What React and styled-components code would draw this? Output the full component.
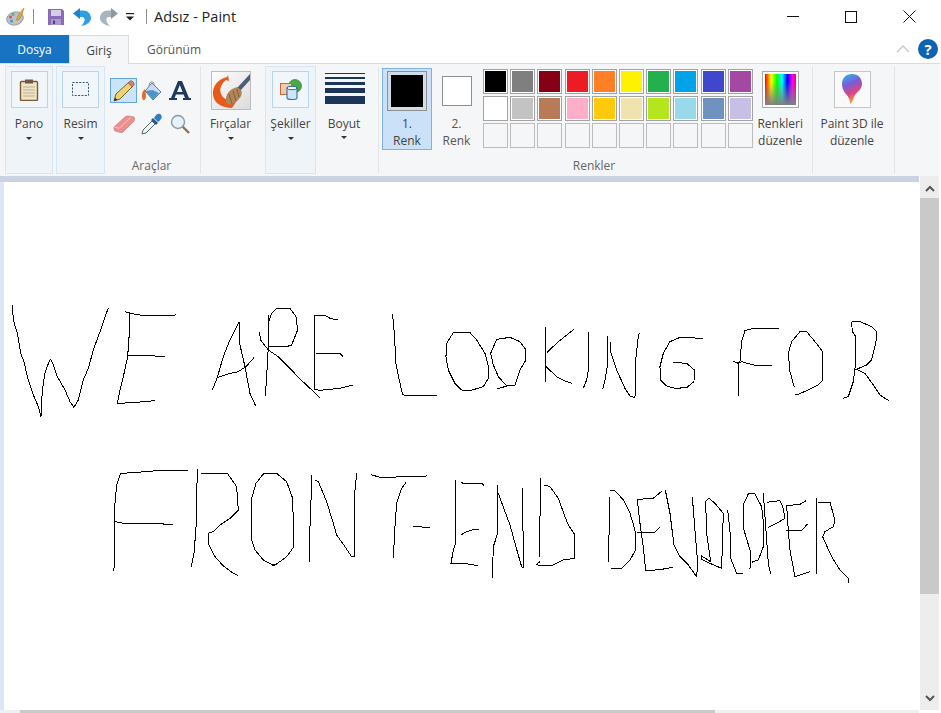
import React from 'react'
import styled, { createGlobalStyle } from 'styled-components'

const GlobalStyle = createGlobalStyle`
  html, body { margin: 0; padding: 0; background: #fff; overflow: hidden; }
  body { font-family: "Open Sans", "Noto Sans", "Liberation Sans", sans-serif; color: #444; }
`

const Window = styled.div`
  width: 941px;
  height: 713px;
  display: flex;
  flex-direction: column;
  overflow: hidden;
`

const TitleBar = styled.div`
  height: 35px;
  box-sizing: border-box;
  padding-bottom: 2px;
  display: flex;
  align-items: center;
  flex-shrink: 0;
`

const QuickIcon = styled.div`
  display: flex;
  align-items: center;
  justify-content: center;
  width: ${({ $w }) => $w}px;
  margin-left: ${({ $ml }) => $ml || 0}px;
`

const TitleSep = styled.div`
  width: 1px;
  height: 15px;
  background: #8d8d8d;
  margin-left: ${({ $ml }) => $ml}px;
`

const Title = styled.div`
  font-size: 14.5px;
  color: #222;
  margin-left: 7px;
  flex: 1;
`

const WinButtons = styled.div`
  display: flex;
  align-items: center;
  margin-right: 25px;
  gap: 46px;
`

const TabBar = styled.div`
  height: 28px;
  display: flex;
  align-items: stretch;
  flex-shrink: 0;
  position: relative;
  z-index: 1;
`

const FileTab = styled.div`
  width: 69px;
  background: #1873c3;
  color: #fff;
  font-size: 12px;
  display: flex;
  align-items: center;
  justify-content: center;
`

const Tab = styled.div`
  width: ${({ $w }) => $w}px;
  font-size: 12px;
  display: flex;
  align-items: center;
  justify-content: center;
  box-sizing: border-box;
  height: ${({ $active }) => ($active ? '29px' : '28px')};
  background: ${({ $active }) => ($active ? '#f5f6f7' : 'transparent')};
  border: 1px solid ${({ $active }) => ($active ? '#dadbdc' : 'transparent')};
  border-bottom: none;
  color: ${({ $active }) => ($active ? '#444' : '#555')};
`

const TabRight = styled.div`
  margin-left: auto;
  display: flex;
  align-items: center;
  gap: 8px;
  padding-right: 3px;
`

const Help = styled.div`
  width: 20px;
  height: 20px;
  border-radius: 50%;
  background: #0f62b0;
  color: #fff;
  font-size: 15px;
  font-weight: 700;
  display: flex;
  align-items: center;
  justify-content: center;
`

const Ribbon = styled.div`
  height: 113px;
  box-sizing: border-box;
  border-top: 1px solid #dadbdc;
  background: #f5f6f7;
  margin-right: 1px;
  padding: 2px 0 0 5px;
  display: flex;
  flex-shrink: 0;
`

const Group = styled.div`
  width: ${({ $w }) => $w}px;
  height: 108px;
  box-sizing: border-box;
  flex-shrink: 0;
  position: relative;
  display: flex;
  flex-direction: column;
  align-items: ${({ $stretch }) => ($stretch ? 'stretch' : 'center')};
  margin-right: ${({ $mr }) => $mr || 0}px;
  margin-left: ${({ $ml }) => $ml || 0}px;
  padding-right: ${({ $pr }) => $pr || 0}px;
  background: ${({ $panel }) => ($panel ? '#eff4f9' : 'transparent')};
  border: 1px solid ${({ $panel }) => ($panel ? '#d8e5f2' : 'transparent')};
  border-right-color: ${({ $panel, $line }) => ($panel ? '#d8e5f2' : $line ? '#e3e5e7' : 'transparent')};
  border-left-color: ${({ $panel, $lineLeft }) => ($panel ? '#d8e5f2' : $lineLeft ? '#e3e5e7' : 'transparent')};
`

const IconBox = styled.div`
  width: 37px;
  height: 37px;
  box-sizing: border-box;
  margin-top: 4px;
  border: 1px solid ${({ $plain }) => ($plain ? '#c6c6c6' : '#b7d5ed')};
  background: ${({ $plain }) => ($plain ? '#fafafa' : '#f1f6fb')};
  display: flex;
  align-items: center;
  justify-content: center;
`

const ButtonLabel = styled.div`
  font-size: 12px;
  line-height: 17px;
  margin-top: ${({ $mt }) => $mt ?? 7}px;
  text-align: center;
  white-space: nowrap;
`

const Caret = styled.div`
  width: 0;
  height: 0;
  margin-top: ${({ $mt }) => $mt ?? 5}px;
  border-left: 3.5px solid transparent;
  border-right: 3.5px solid transparent;
  border-top: 3.5px solid #333;
`

const GroupLabel = styled.div`
  position: absolute;
  left: 0;
  right: 0;
  bottom: -1px;
  padding-right: 3px;
  font-size: 12px;
  line-height: 16px;
  text-align: center;
  color: #666;
`

const ToolGrid = styled.div`
  display: grid;
  grid-template-columns: 27px 27px 28px;
  grid-template-rows: 25px 25px;
  row-gap: 8px;
  column-gap: 1px;
  margin-top: 11px;
  align-self: flex-start;
  margin-left: 4px;
`

const Tool = styled.div`
  box-sizing: border-box;
  display: flex;
  align-items: center;
  justify-content: center;
  background: ${({ $active }) => ($active ? '#cce4f7' : 'transparent')};
  border: 1px solid ${({ $active }) => ($active ? '#65a6dc' : 'transparent')};
`

const BrushBox = styled.div`
  width: 40px;
  height: 39px;
  margin-top: 4px;
  box-sizing: border-box;
  border: 1px solid #bdbdbd;
  overflow: hidden;
`

const SizeLines = styled.div`
  width: 40px;
  height: 32px;
  margin-top: 6px;
  margin-left: 1px;
  display: flex;
  flex-direction: column;
  gap: 3px;
`

const SizeLine = styled.div`
  height: ${({ $h }) => $h}px;
  flex-shrink: 0;
  background: #1d3557;
`

const ColorRow = styled.div`
  display: flex;
  padding-left: 3px;
`

const ColorSlot = styled.div`
  box-sizing: border-box;
  width: ${({ $w }) => $w}px;
  height: 82px;
  margin-top: 1px;
  display: flex;
  flex-direction: column;
  align-items: center;
  background: ${({ $active }) => ($active ? '#cbe1f7' : 'transparent')};
  border: 1px solid ${({ $active }) => ($active ? '#7fb2e2' : 'transparent')};
`

const SlotSwatchWrap = styled.div`
  height: 42px;
  display: flex;
  align-items: center;
  justify-content: center;
  margin-top: 1px;
`

const BigSwatch = styled.div`
  box-sizing: border-box;
  width: ${({ $s }) => $s}px;
  height: ${({ $s }) => $s}px;
  background: ${({ $c }) => $c};
  border: 1px solid #8f8f8f;
  box-shadow: inset 0 0 0 ${({ $inset }) => $inset}px #cfdce9;
`

const SlotLabel = styled.div`
  font-size: 12px;
  line-height: 17px;
  text-align: center;
  margin-top: 4px;
  color: ${({ $active }) => ($active ? '#444' : '#555')};
`

const Palette = styled.div`
  display: grid;
  grid-template-columns: repeat(10, 25px);
  grid-auto-rows: 25px;
  column-gap: 2.2px;
  row-gap: 2px;
  margin-left: 2px;
  margin-top: 2px;
`

const Swatch = styled.div`
  box-sizing: border-box;
  border: 1px solid ${({ $empty }) => ($empty ? '#bcbcbc' : '#a3a3a3')};
  background: ${({ $c }) => $c || '#f5f6f7'};
  box-shadow: ${({ $empty }) => ($empty ? 'none' : 'inset 0 0 0 1px #fff')};
`

const EditButton = styled.div`
  width: 55px;
  display: flex;
  flex-direction: column;
  align-items: center;
`

const RainbowBox = styled.div`
  width: 37px;
  height: 37px;
  box-sizing: border-box;
  margin-top: 4px;
  border: 1px solid #a9a9a9;
  padding: 2px;
  background: #fff;
`

const Rainbow = styled.div`
  width: 100%;
  height: 100%;
  background:
    linear-gradient(to bottom, rgba(128, 128, 128, 0) 25%, rgba(128, 128, 128, 1) 100%),
    linear-gradient(to right, #ff0000, #ffff00 20%, #00ff00 38%, #00ffff 55%, #0000ff 72%, #ff00ff 88%, #ff0040);
`

const Workspace = styled.div`
  flex: 1;
  display: flex;
  min-height: 0;
`

const Stage = styled.div`
  width: 919px;
  display: flex;
  flex-direction: column;
`

const StageTop = styled.div`
  height: 6px;
  background: #c9d3e1;
  flex-shrink: 0;
`

const StageBody = styled.div`
  flex: 1;
  display: flex;
  min-height: 0;
`

const StageLeft = styled.div`
  width: 4px;
  background: #dde6f4;
  flex-shrink: 0;
`

const Canvas = styled.svg`
  display: block;
  width: 915px;
  height: 528px;
  background: #fff;
`

const VScroll = styled.div`
  width: 19px;
  margin-left: 1px;
  background: #ededed;
  display: flex;
  flex-direction: column;
`

const ScrollUp = styled.div`
  height: 22px;
  box-sizing: border-box;
  padding-top: 2px;
  display: flex;
  align-items: center;
  justify-content: center;
  flex-shrink: 0;
`

const ScrollDown = styled.div`
  flex: 1;
  padding-bottom: 8px;
  display: flex;
  align-items: flex-end;
  justify-content: center;
`

const VThumb = styled.div`
  height: 396px;
  flex-shrink: 0;
  background: #c9c9c9;
`

const HScroll = styled.div`
  height: 3px;
  flex-shrink: 0;
  background: #f0f0f0;
  padding-left: 20px;
  margin-right: 22px;
`

const HThumb = styled.div`
  width: 695px;
  height: 100%;
  background: #c9c9c9;
`

const ArrowSvg = styled.svg`
  transform: ${({ $flip }) => ($flip ? 'scaleX(-1)' : 'none')};
`

const colors = [
  '#000000', '#7f7f7f', '#880015', '#ed1c24', '#ff7f27', '#fff200', '#22b14c', '#00a2e8', '#3f48cc', '#a349a4',
  '#ffffff', '#c3c3c3', '#b97a57', '#ffaec9', '#ffc90e', '#efe4b0', '#b5e61d', '#99d9ea', '#7092be', '#c8bfe7',
  null, null, null, null, null, null, null, null, null, null,
]

// hand drawn strokes, traced at 3x, grouped by the origin of each trace
const strokes = [
  {
    at: [0, 290],
    lines: [
      '37,45 40,90 52,130 62,190 72,215 83,265 100,315 115,350 123,380 127,300 135,250 147,215 152,208 160,225 172,260 195,300 210,335 222,352 235,330 250,270 265,235 280,180 300,125 315,80 325,55',
      '375,65 390,70 440,78 490,78 527,75',
      '390,65 388,130 383,200 370,260 358,310 352,340 400,338 465,332',
      '385,198 395,196 495,199',
      '637,300 652,262 670,200 690,150 718,95 720,165 735,230 750,310 767,348',
      '652,263 680,253 715,245 740,228 762,203',
      '807,75 805,170 800,260 796,317',
      '805,100 815,70 830,55 870,55 888,80 893,120 875,165 860,170 805,170',
      '778,127 782,150 805,180 835,200 870,235 895,262 930,295 960,323',
      '1013,90 990,85 975,76 945,76 943,190 945,298 960,301 1020,295 1058,285',
      '943,189 1020,190 1030,200',
      '1178,72 1183,130 1188,220 1198,270 1208,315 1310,316',
      '1410,128 1360,128 1340,160 1338,200 1345,240 1365,280 1385,300 1410,302',
    ],
  },
  {
    at: [470, 300],
    lines: [
      '0,98 20,120 45,160 55,200 55,235 40,260 0,272',
      '82,267 110,258 135,255 150,210 168,180 168,150 150,125 120,112 80,118 62,160 70,195 85,230 110,258',
      '226,82 226,247',
      '230,158 265,125 312,88',
      '226,198 260,230 285,243 305,250',
      '355,95 355,210 350,240 340,265',
      '412,108 412,200 405,240 398,268',
      '422,125 422,155 440,210 465,265 480,288 495,293 497,180 505,110 508,100',
      '698,115 630,112 600,125 580,160 570,200 571,240 590,258 615,265 650,263 672,245 673,210 650,190 610,187',
      '927,85 850,85 825,92 815,125 810,185 805,190 805,287',
      '790,184 805,190 815,185 850,195 905,196',
      '973,262 960,215 955,160 965,125 990,95 1010,95 1035,125 1058,155 1058,240 1045,255 1010,272 985,283 975,282',
      '1145,65 1170,65 1205,80 1220,95 1218,125 1205,180 1190,195 1155,210 1158,110 1147,95 1145,65',
      '1155,208 1150,245 1135,290 1120,295',
      '1160,208 1185,220 1210,255 1230,285 1258,303',
    ],
  },
  {
    at: [100, 460],
    lines: [
      '265,30 170,32 100,38 62,40 50,75 45,130 45,250 45,310 40,333',
      '42,184 70,190 130,190 218,193',
      '292,28 288,205 282,280 274,320',
      '302,40 382,40 410,80 415,150 390,175 360,195 340,215 325,220 325,250 345,290 370,318 400,340 415,347',
      '525,318 490,300 465,270 455,240 455,115 468,70 490,42 530,40 560,65 578,115 582,260 560,290 530,312 515,316',
      '636,45 630,200 628,305',
      '645,60 655,65 680,125 700,190 710,225 735,260 755,290 763,290 765,90 770,40',
      '813,44 840,52 940,50 980,48',
      '918,68 905,85 890,130 885,200 880,295',
      '940,200 990,202',
    ],
  },
  {
    at: [440, 470],
    lines: [
      '47,30 47,220 40,240 33,280 85,282 115,287',
      '63,38 80,42 128,42 133,47',
      '63,195 75,187 95,180 117,178',
      '173,45 173,190 160,230 157,325',
      '175,70 195,125 210,165 225,220 245,290 250,293 248,55',
      '302,25 298,260',
      '312,45 330,50 355,85 375,140 385,165 405,195 405,265 370,270 340,285 300,287 290,283 300,275',
      '510,80 505,275',
      '510,60 525,62 550,90 570,130 585,180 587,240 570,270 545,295 512,297',
      '667,62 640,85 592,88 600,160 610,230 617,303 665,298 700,292',
      '590,187 645,187 662,170',
      '676,60 690,130 702,225 720,260 745,285 770,320 773,280 757,80',
      '807,85 797,95 800,190 812,275 785,258 785,268 810,280 845,295 850,130 825,100 807,85',
      '863,120 870,180 872,265 890,310 908,310',
      '930,297 933,250 912,180 912,100 925,72 945,72 965,110 972,170 970,230 955,270 935,277',
      '970,70 985,280 992,312',
      '980,97 1020,92 1030,115 1035,145 1010,160 985,172',
      '1098,92 1080,103 1040,107 1045,180 1050,240 1065,320 1110,305',
      '1037,181 1085,181 1103,162',
      '1130,85 1130,312',
      '1135,97 1170,97 1185,150 1180,170 1155,185 1148,200 1175,260 1200,300 1225,325 1227,338',
    ],
  },
]

const AppIcon = () => (
  <svg width="20" height="20" viewBox="0 0 20 20">
    <ellipse cx="9" cy="11.5" rx="8.5" ry="6.5" fill="#b8c4cc" stroke="#7d8c98" strokeWidth="0.7" transform="rotate(-15 9 11.5)" />
    <circle cx="4.5" cy="10" r="1.5" fill="#d9534f" />
    <circle cx="7" cy="7.5" r="1.4" fill="#5fb05f" />
    <circle cx="5.5" cy="14" r="1.5" fill="#4a8fd8" />
    <circle cx="9.5" cy="15" r="1.3" fill="#e8c84a" />
    <path d="M18 1 L13 7 L10 13 L13 13 L16 8 Z" fill="#e8a33d" stroke="#a8702a" strokeWidth="0.5" />
  </svg>
)

const SaveIcon = () => (
  <svg width="16" height="16" viewBox="0 0 16 16">
    <path d="M0 0 H14 L16 2 V16 H0 Z" fill="#8a6bb8" />
    <rect x="3" y="1" width="10" height="6" fill="#d7cbe8" />
    <rect x="3" y="10" width="10" height="6" fill="#a99ad0" />
    <rect x="5" y="11.5" width="2" height="3.5" fill="#553d86" />
  </svg>
)

const ArrowIcon = ({ main, dark, flip }) => (
  <ArrowSvg width="18" height="18" viewBox="0 0 18 18" $flip={flip}>
    <path d="M6 2.5 H10 C15 2.5 18 6 18 10 C18 14 14 17 8 18 C10.5 15.5 12 13 11.6 11 C11.3 9.4 10 9 8.5 9 H6 Z" fill={main} />
    <path d="M0 5.5 L7 0 V11 Z" fill={dark} />
  </ArrowSvg>
)

const MoreIcon = () => (
  <svg width="8" height="8" viewBox="0 0 8 8">
    <rect x="0" y="0" width="8" height="1.2" fill="#222" />
    <path d="M0 3.5 H8 L4 7.5 Z" fill="#222" />
  </svg>
)

const ClipboardIcon = () => (
  <svg width="20" height="22" viewBox="0 0 20 22">
    <rect x="1.5" y="2.5" width="17" height="19" rx="1" fill="#efe4c4" stroke="#7b5a34" strokeWidth="1.4" />
    <rect x="6" y="0.5" width="8" height="4" fill="#6e5a44" />
    <path d="M4 8 H16 M4 11 H16 M4 14 H16 M4 17 H16" stroke="#b9b09a" strokeWidth="1" />
  </svg>
)

const SelectIcon = () => (
  <svg width="18" height="15" viewBox="0 0 18 15">
    <rect x="0.5" y="0.5" width="16" height="13" fill="none" stroke="#33527c" strokeWidth="1" strokeDasharray="2 1.4" />
  </svg>
)

const PencilIcon = () => (
  <svg width="22" height="22" viewBox="0 0 22 22">
    <path d="M1 21 L3 14 L16 2 L20 6 L7 19 Z" fill="#f0d36a" stroke="#5e5230" strokeWidth="0.9" />
    <path d="M15 3 L17 1 Q18 0.5 19 1 L21 3 Q21.5 4 21 5 L19 7 Z" fill="#d67b7b" stroke="#7a5050" strokeWidth="0.6" />
    <path d="M1 21 L2 17.5 L4.5 20 Z" fill="#333" />
  </svg>
)

const FillIcon = () => (
  <svg width="22" height="22" viewBox="0 0 22 22">
    <path d="M4 9 C1 11 0 16 2 20 C4 21 5 18 5 15 Z" fill="#ea6a25" />
    <path d="M11 3 L20 12 L12 20 L4 11 Z" fill="#c9ddf0" stroke="#5a7d9c" strokeWidth="1" />
    <path d="M4.5 11 L11.5 10 L18 13 L12 19.5 Z" fill="#4d93c9" />
    <path d="M8 6 C8 1 13 0 13 5" fill="none" stroke="#8b8b8b" strokeWidth="1" />
  </svg>
)

const TextIcon = () => (
  <svg width="22" height="22" viewBox="0 0 22 22">
    <path d="M9 1 H13 L20 18 H22 V20 H14 V18 H16 L14.6 14.4 H7 L5.6 18 H8 V20 H0 V18 H2 Z M8 12 H13.6 L10.8 5 Z" fill="#1f3a5f" fillRule="evenodd" />
  </svg>
)

const EraserIcon = () => (
  <svg width="22" height="20" viewBox="0 0 22 20">
    <path d="M1 13 L12 3 Q13 2 15 2 L21 3 Q22 5 21 7 L10 18 Q8 19 6 18 L2 17 Q0.5 15 1 13 Z" fill="#ec8f8f" stroke="#c97878" strokeWidth="0.7" />
    <path d="M1.5 13 L6 14.5 L18 3" fill="none" stroke="#f8c4c4" strokeWidth="1" />
  </svg>
)

const DropperIcon = () => (
  <svg width="22" height="22" viewBox="0 0 22 22">
    <path d="M1 21 L2 17 L11 8 L14 11 L5 20 Z" fill="#eef3f7" stroke="#566" strokeWidth="1" />
    <path d="M10 7 L15 12 L17 10 L12 5 Z" fill="#27558c" />
    <path d="M13 5 C15 1 17 0 19 1 C22 3 21 6 17 9 Z" fill="#2d7fc9" />
  </svg>
)

const ZoomIcon = () => (
  <svg width="20" height="20" viewBox="0 0 20 20">
    <path d="M12 12 L19 19" stroke="#8a7350" strokeWidth="2.4" />
    <circle cx="8" cy="8" r="6.5" fill="#e6f1fa" stroke="#8b9aa8" strokeWidth="1.4" />
  </svg>
)

const BrushIcon = () => (
  <svg width="38" height="37" viewBox="0 0 38 37">
    <defs>
      <linearGradient id="brushBg" x1="0" y1="0" x2="1" y2="1">
        <stop offset="0" stopColor="#fdfdfd" />
        <stop offset="1" stopColor="#dcdcdc" />
      </linearGradient>
    </defs>
    <rect width="38" height="37" fill="url(#brushBg)" />
    <path d="M38 2 L25 16 L28 19 L38 8 Z" fill="#4b5f78" />
    <path d="M15 5 C6 7 0 14 1 23 C2 31 10 36 20 36 L24 30 C17 29 11 27 9 22 C7 16 10 11 14 8 L17 9 L16 3 Z" fill="#e8591a" />
    <path d="M25 15 C18 17 13 22 14 30 C16 34 20 33 24 30 C29 26 31 21 29 18 Z" fill="#b08557" />
    <path d="M17 22 L20 32 M21 19 L24 29 M25 17 L27 25" stroke="#856038" strokeWidth="1" />
  </svg>
)

const ShapesIcon = () => (
  <svg width="24" height="24" viewBox="0 0 24 24">
    <circle cx="16" cy="8" r="6.5" fill="#4aa84a" stroke="#2d7f33" strokeWidth="0.7" />
    <rect x="1.5" y="5.5" width="11" height="11" fill="#f4c9a8" stroke="#c8683a" strokeWidth="1" />
    <path d="M8 10 C8 8 18 8 18 10 V20 C18 22 8 22 8 20 Z" fill="#cfe6f7" stroke="#2b6fb3" strokeWidth="1.1" />
    <ellipse cx="13" cy="10" rx="5" ry="1.7" fill="#fff" stroke="#2b6fb3" strokeWidth="1" />
  </svg>
)

const Paint3DIcon = () => (
  <svg width="22" height="31" viewBox="0 0 22 31">
    <defs>
      <linearGradient id="dropFill" x1="0.2" y1="0" x2="0.5" y2="1">
        <stop offset="0" stopColor="#2fb3e8" />
        <stop offset="0.35" stopColor="#7b5bd6" />
        <stop offset="0.68" stopColor="#e0457f" />
        <stop offset="1" stopColor="#f5b52e" />
      </linearGradient>
    </defs>
    <path d="M11 0 C17 0 21 4 21 10 C21 16 15 18 13 23 C12 26 11 29 9 30 C9 26 8 23 4 19 C2 16 1 13 1 10 C1 4 5 0 11 0 Z" fill="url(#dropFill)" />
  </svg>
)

const App = () => {
  return (
    <Window>
      <GlobalStyle />
      <TitleBar>
        <QuickIcon $w={20} $ml={6}><AppIcon /></QuickIcon>
        <TitleSep $ml={7} />
        <QuickIcon $w={16} $ml={14}><SaveIcon /></QuickIcon>
        <QuickIcon $w={18} $ml={9}><ArrowIcon main="#2f9fe4" dark="#1f7fc8" /></QuickIcon>
        <QuickIcon $w={18} $ml={9}><ArrowIcon main="#aab4bd" dark="#8c98a3" flip /></QuickIcon>
        <QuickIcon $w={8} $ml={8}><MoreIcon /></QuickIcon>
        <TitleSep $ml={12} />
        <Title>Adsız - Paint</Title>
        <WinButtons>
          <svg width="12" height="12" viewBox="0 0 12 12"><path d="M0 5.5 H12" stroke="#111" strokeWidth="1" /></svg>
          <svg width="12" height="12" viewBox="0 0 12 12"><rect x="0.5" y="0.5" width="11" height="11" fill="none" stroke="#111" strokeWidth="1" /></svg>
          <svg width="13" height="13" viewBox="0 0 13 13"><path d="M0.5 0.5 L12.5 12.5 M12.5 0.5 L0.5 12.5" stroke="#111" strokeWidth="1" /></svg>
        </WinButtons>
      </TitleBar>

      <TabBar>
        <FileTab>Dosya</FileTab>
        <Tab $w={60} $active>Giriş</Tab>
        <Tab $w={90}>Görünüm</Tab>
        <TabRight>
          <svg width="14" height="8" viewBox="0 0 14 8"><path d="M1 7 L7 1 L13 7" fill="none" stroke="#c0c4c8" strokeWidth="1.2" /></svg>
          <Help>?</Help>
        </TabRight>
      </TabBar>

      <Ribbon>
        <Group $w={48} $panel $mr={3}>
          <IconBox><ClipboardIcon /></IconBox>
          <ButtonLabel>Pano</ButtonLabel>
          <Caret />
        </Group>
        <Group $w={49} $panel>
          <IconBox><SelectIcon /></IconBox>
          <ButtonLabel>Resim</ButtonLabel>
          <Caret />
        </Group>
        <Group $w={96} $line>
          <ToolGrid>
            <Tool $active><PencilIcon /></Tool>
            <Tool><FillIcon /></Tool>
            <Tool><TextIcon /></Tool>
            <Tool><EraserIcon /></Tool>
            <Tool><DropperIcon /></Tool>
            <Tool><ZoomIcon /></Tool>
          </ToolGrid>
          <GroupLabel>Araçlar</GroupLabel>
        </Group>
        <Group $w={64} $pr={5}>
          <BrushBox><BrushIcon /></BrushBox>
          <ButtonLabel $mt={5}>Fırçalar</ButtonLabel>
          <Caret />
        </Group>
        <Group $w={51} $panel>
          <IconBox><ShapesIcon /></IconBox>
          <ButtonLabel>Şekiller</ButtonLabel>
          <Caret />
        </Group>
        <Group $w={56}>
          <SizeLines>
            <SizeLine $h={1} />
            <SizeLine $h={2} />
            <SizeLine $h={3} />
            <SizeLine $h={5} />
            <SizeLine $h={8} />
          </SizeLines>
          <ButtonLabel $mt={10}>Boyut</ButtonLabel>
          <Caret $mt={4} />
        </Group>
        <Group $w={435} $stretch $ml={6} $line $lineLeft>
          <ColorRow>
            <ColorSlot $w={50} $active>
              <SlotSwatchWrap><BigSwatch $s={40} $c="#000" $inset={3} /></SlotSwatchWrap>
              <SlotLabel $active>1.<br />Renk</SlotLabel>
            </ColorSlot>
            <ColorSlot $w={49}>
              <SlotSwatchWrap><BigSwatch $s={30} $c="#fff" $inset={0} /></SlotSwatchWrap>
              <SlotLabel>2.<br />Renk</SlotLabel>
            </ColorSlot>
            <Palette>
              {colors.map((c, i) => (
                <Swatch key={i} $c={c} $empty={!c} />
              ))}
            </Palette>
            <EditButton>
              <RainbowBox><Rainbow /></RainbowBox>
              <ButtonLabel>Renkleri<br />düzenle</ButtonLabel>
            </EditButton>
          </ColorRow>
          <GroupLabel>Renkler</GroupLabel>
        </Group>
        <Group $w={82} $line $pr={4}>
          <IconBox $plain><Paint3DIcon /></IconBox>
          <ButtonLabel>Paint 3D ile<br />düzenle</ButtonLabel>
        </Group>
      </Ribbon>

      <Workspace>
        <Stage>
          <StageTop />
          <StageBody>
            <StageLeft />
            <Canvas viewBox="4 182 915 528">
              {strokes.map(({ at, lines }) => (
                <g key={at.join()} transform={`translate(${at[0]} ${at[1]}) scale(0.3333)`}>
                  {lines.map((points, i) => (
                    <polyline
                      key={i}
                      points={points}
                      fill="none"
                      stroke="#000"
                      strokeWidth="1"
                      vectorEffect="non-scaling-stroke"
                      shapeRendering="crispEdges"
                    />
                  ))}
                </g>
              ))}
            </Canvas>
          </StageBody>
        </Stage>
        <VScroll>
          <ScrollUp>
            <svg width="10" height="7" viewBox="0 0 10 7"><path d="M1 6 L5 2 L9 6" fill="none" stroke="#555" strokeWidth="2" /></svg>
          </ScrollUp>
          <VThumb />
          <ScrollDown>
            <svg width="10" height="7" viewBox="0 0 10 7"><path d="M1 1 L5 5 L9 1" fill="none" stroke="#555" strokeWidth="2" /></svg>
          </ScrollDown>
        </VScroll>
      </Workspace>
      <HScroll><HThumb /></HScroll>
    </Window>
  )
}

export default App
